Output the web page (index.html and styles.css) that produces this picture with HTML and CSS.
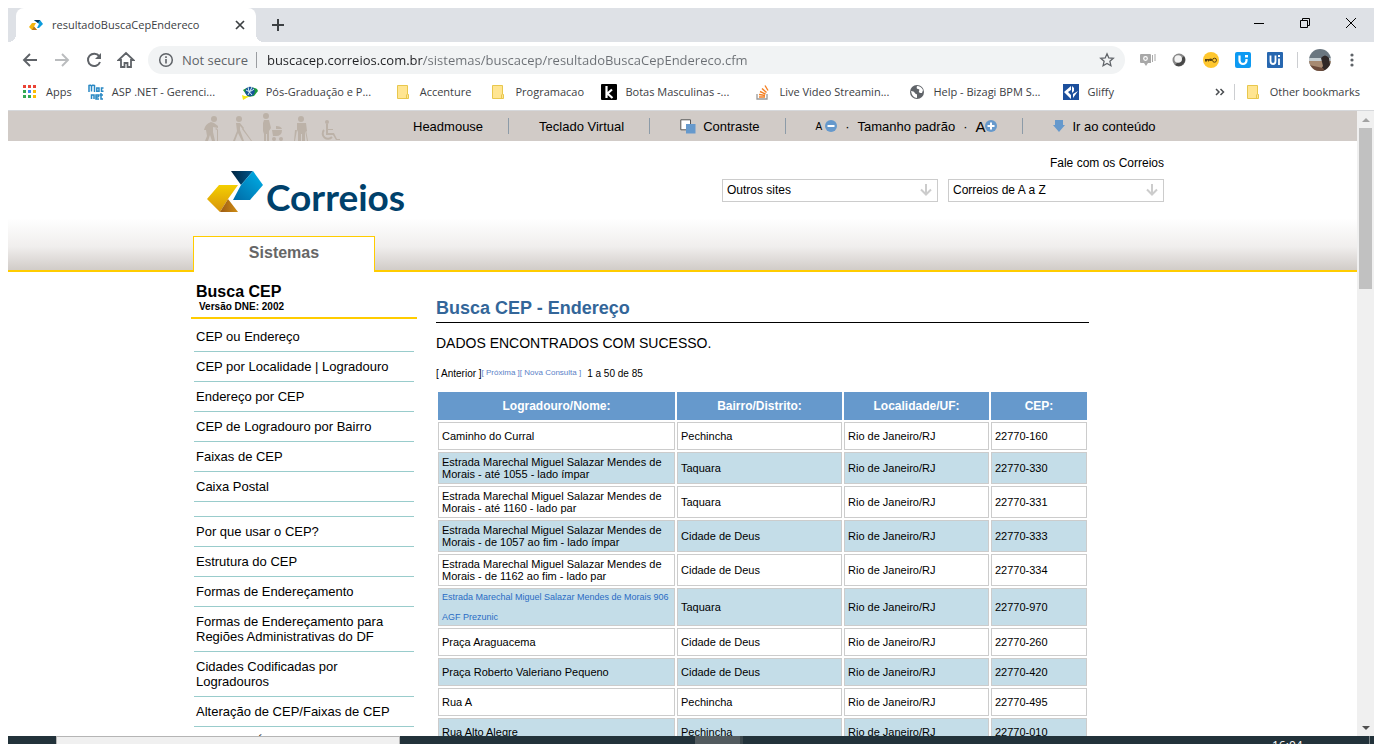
FILE: index.html
```html
<!DOCTYPE html>
<html lang="pt-BR">
<head>
<meta charset="utf-8">
<title>resultadoBuscaCepEndereco</title>
<link rel="stylesheet" href="styles.css">
</head>
<body>
<header class="browser">
  <div class="tabstrip">
    <div class="tab">
      <svg class="icon16" viewBox="0 0 16 16"><path d="M6 3h6l3 4-4 4H9l2-4z" fill="#0b9bdc"/><path d="M6 3h6l-2 3z" fill="#07375a"/><path d="M4 6h4L6 9.500l3 3.500H4L1 10z" fill="#f3b40d"/><path d="M6 9.500L9 13H4z" fill="#b8761a"/></svg>
      <span class="tab-title">resultadoBuscaCepEndereco</span>
      <button class="bare tab-close" aria-label="Close tab"><svg width="10" height="10" viewBox="0 0 10 10"><path d="M1 1l8 8M9 1l-8 8" stroke="#3c4043" stroke-width="1.7"/></svg></button>
    </div>
    <button class="bare new-tab" aria-label="New tab"><svg width="14" height="14" viewBox="0 0 14 14"><path d="M7 1v12M1 7h12" stroke="#3c4043" stroke-width="2"/></svg></button>
    <div class="window-controls">
      <button class="bare" aria-label="Minimize"><svg width="10" height="10" viewBox="0 0 10 10"><path d="M0 5.500h10" stroke="#000"/></svg></button>
      <button class="bare" aria-label="Restore"><svg width="10" height="10" viewBox="0 0 10 10"><path d="M.5 2.500h7v7h-7zM2.500 2V.5h7v7H8" fill="none" stroke="#000"/></svg></button>
      <button class="bare" aria-label="Close"><svg width="10" height="10" viewBox="0 0 10 10"><path d="M0 0l10 10M10 0L0 10" stroke="#000"/></svg></button>
    </div>
  </div>
  <div class="toolbar">
    <button class="bare tool" aria-label="Back"><svg width="16" height="16" viewBox="0 0 16 16"><path d="M15 8H2M8 2L2 8l6 6" fill="none" stroke="#5f6368" stroke-width="1.900"/></svg></button>
    <button class="bare tool" aria-label="Forward"><svg width="16" height="16" viewBox="0 0 16 16"><path d="M1 8h13M8 2l6 6-6 6" fill="none" stroke="#babcbe" stroke-width="1.900"/></svg></button>
    <button class="bare tool" aria-label="Reload"><svg width="16" height="16" viewBox="0 0 16 16"><path d="M13.200 4.200A6.200 6.200 0 1 0 14 10" fill="none" stroke="#5f6368" stroke-width="2"/><path d="M15 1v6H9z" fill="#5f6368"/></svg></button>
    <button class="bare tool" aria-label="Home"><svg width="18" height="18" viewBox="0 0 18 18"><path d="M4 9v7h3.500v-4h3v4H14V9h2.500L9 2 1.500 9z" fill="none" stroke="#5f6368" stroke-width="1.800"/></svg></button>
    <div class="omnibox">
      <svg width="16" height="16" viewBox="0 0 16 16"><circle cx="8" cy="8" r="6.300" fill="none" stroke="#5f6368" stroke-width="1.500"/><path d="M8 7v4.500M8 4.300v1.600" stroke="#5f6368" stroke-width="1.600"/></svg>
      <span class="secure">Not secure</span>
      <input class="url" type="text" aria-label="Address" value="buscacep.correios.com.br/sistemas/buscacep/resultadoBuscaCepEndereco.cfm">
      <button class="bare" aria-label="Bookmark this page"><svg width="16" height="16" viewBox="0 0 16 16"><path d="M8 1.800l1.800 4.100 4.500.4-3.400 3 1 4.400L8 11.400l-3.900 2.300 1-4.400-3.400-3 4.500-.4z" fill="none" stroke="#5f6368" stroke-width="1.300"/></svg></button>
    </div>
    <div class="extensions">
      <button class="bare tool" aria-label="Recorder"><svg width="17" height="16" viewBox="0 0 17 16"><path d="M2 2h9q1 0 1 1v8H9l-2 3-2-3H2q-1 0-1-1V3q0-1 1-1z" fill="#a8a8a8"/><path d="M13 3h1v7h-1zM15.500 2h1v7h-1z" fill="#a8a8a8"/><circle cx="6.500" cy="6.500" r="1.800" fill="none" stroke="#fff" stroke-width="1.200"/></svg></button>
      <button class="bare tool" aria-label="Circle extension"><svg width="16" height="16" viewBox="0 0 16 16"><circle cx="8" cy="8" r="6.500" fill="#888"/><path d="M4 13a6.500 6.500 0 0 0 9-9z" fill="#484848"/><circle cx="7.200" cy="7" r="3.800" fill="#f3f3f3"/></svg></button>
      <button class="bare tool" aria-label="Password extension"><svg width="16" height="16" viewBox="0 0 16 16"><circle cx="8" cy="8" r="8" fill="#ffc72e"/><path d="M2 7h4q2-1 3 0v1.500q-1 1-3 0v1H5v-1H4v1H2z" fill="#5b4310"/><circle cx="11.500" cy="8.200" r="2" fill="none" stroke="#5b4310"/></svg></button>
      <button class="bare tool" aria-label="UiPath web"><svg width="16" height="16" viewBox="0 0 16 16"><rect width="16" height="16" rx="2" fill="#0d9af2"/><path d="M4.500 3.500v5a3.500 3.500 0 0 0 7 0V7" fill="none" stroke="#fff" stroke-width="2.200"/><path d="M10 3h3v2.500h-3z" fill="#fff"/></svg></button>
      <button class="bare tool" aria-label="UiPath"><svg width="16" height="16" viewBox="0 0 16 16"><rect width="16" height="16" rx="1" fill="#2767b0"/><path d="M3.500 3.500V9c0 4 5 4 5 0V3.500M12 6.500V13" fill="none" stroke="#fff" stroke-width="1.800"/><path d="M11 3h2v2h-2z" fill="#fff"/></svg></button>
    </div>
    <button class="bare profile" aria-label="Profile"><svg width="22" height="22" viewBox="0 0 22 22"><clipPath id="face"><circle cx="11" cy="11" r="11"/></clipPath><g clip-path="url(#face)"><path d="M0 0h22v22H0z" fill="#6b7780"/><path d="M0 9h22v3H0z" fill="#c5ced2"/><path d="M0 12h22v10H0z" fill="#a78a72"/><path d="M12 9q4-5 8 0l2 13H11l3-5z" fill="#302827"/><path d="M0 16l14 3 2 3H0z" fill="#6d4c3c"/></g></svg></button>
    <button class="bare tool" aria-label="Menu"><svg width="16" height="16" viewBox="0 0 16 16" fill="#5f6368"><circle cx="8" cy="3" r="1.600"/><circle cx="8" cy="8" r="1.600"/><circle cx="8" cy="13" r="1.600"/></svg></button>
  </div>
  <nav class="bookmarks" aria-label="Bookmarks">
    <a href="#"><svg class="icon16" viewBox="0 0 16 16"><path d="M1 1h3v3H1zM6 1h3v3H6zM11 1h3v3h-3z" fill="#ea4335"/><path d="M1 6h3v3H1zM1 11h3v3H1zM6 11h3v3H6z" fill="#34a853"/><path d="M6 6h3v3H6z" fill="#4285f4"/><path d="M11 6h3v3h-3zM11 11h3v3h-3z" fill="#fbbc05"/></svg><span>Apps</span></a>
    <a href="#"><svg class="icon16" viewBox="0 0 16 16" fill="none" stroke="#2888c4" stroke-width="1.500"><path d="M1 8V1.500q2-1 2.500 1v5M3.500 2.500q.5-2 3-1V8M11 8V4H8.800v3.200H11M15.500 4h-2v3.200h2M3.500 15v-4H6v4M10.500 13H8v-2h2.500v2M8 13v2h3M13 9v6h2M11.500 11H15"/></svg><span class="long">ASP .NET - Gerenci...</span></a>
    <a href="#"><svg class="icon16" viewBox="0 0 16 16"><path d="M1 6q6-5 14-1l1 2-4 5-6 1z" fill="#1e9c3a"/><circle cx="8" cy="7.500" r="4.800" fill="#17549a"/><path d="M4 6q4 3 8-1M6 3q0 5 4 8M10 3L6 11" stroke="#d9eef5" fill="none"/><path d="M0 11q4 2 8 1l-7 4z" fill="#f2e713"/></svg><span class="long">Pós-Graduação e P...</span></a>
    <a href="#"><svg class="icon16" viewBox="0 0 16 16"><path d="M1.500 1.500h10v9h1v4h-11z" fill="#ffe591" stroke="#e8c74d"/><path d="M10.500 10.500v4" stroke="#e8c74d"/></svg><span>Accenture</span></a>
    <a href="#"><svg class="icon16" viewBox="0 0 16 16"><path d="M1.500 1.500h10v9h1v4h-11z" fill="#ffe591" stroke="#e8c74d"/><path d="M10.500 10.500v4" stroke="#e8c74d"/></svg><span class="mid">Programacao</span></a>
    <a href="#"><svg class="icon16" viewBox="0 0 16 16"><rect width="16" height="16" rx="1" fill="#000"/><path d="M5.500 2v12M11 5.500L6.500 9.500l5 4.500" fill="none" stroke="#fff" stroke-width="2.200"/></svg><span class="long">Botas Masculinas -...</span></a>
    <a href="#"><svg class="icon16" viewBox="0 0 16 16"><path d="M2 10v5h10v-5" fill="none" stroke="#999" stroke-width="1.300"/><path d="M4 13h6M4 10.500l6 1M5 7.500l5.500 2.500M7 4.500l4.500 4M10 1.500l3 5" stroke="#f48024" stroke-width="1.400"/></svg><span class="long">Live Video Streamin...</span></a>
    <a href="#"><svg class="icon16" viewBox="0 0 16 16"><circle cx="8" cy="8" r="7" fill="#5f6368"/><path d="M2 7q3 0 4 2t2 1v4q-5 0-6-7M8 2q-1 3 1 3t1 2 3 2l1-3q-2-4-6-4" fill="#fff"/></svg><span class="long">Help - Bizagi BPM S...</span></a>
    <a href="#"><svg class="icon16" viewBox="0 0 16 16"><path d="M0 0h16v16H0z" fill="#1c4f9c"/><path d="M1 8l7-6v4L5 8l3 3v4zM9 2l2 2v3l-2 2zM10 10l5-3-5 7z" fill="#fff"/></svg><span>Gliffy</span></a>
    <button class="bare overflow" aria-label="More bookmarks"><svg width="10" height="8" viewBox="0 0 10 8"><path d="M1 1l3 3-3 3M5.500 1l3 3-3 3" fill="none" stroke="#4a4d51" stroke-width="1.500"/></svg></button>
    <a class="other" href="#"><svg class="icon16" viewBox="0 0 16 16"><path d="M1.500 1.500h10v9h1v4h-11z" fill="#ffe591" stroke="#e8c74d"/><path d="M10.500 10.500v4" stroke="#e8c74d"/></svg><span>Other bookmarks</span></a>
  </nav>
</header>

<div class="viewport">
  <div class="page">
    <div class="access">
      <div class="wrap access-row">
        <svg class="people" width="138" height="28" viewBox="0 0 138 28" fill="#bcb2a8">
          <circle cx="11" cy="6" r="3"/><path d="M8 9q-6 2-7 8h2l1 6-2 5h3l2-6 2 6h3l-2-9 0-5 5 1v-2l-4-3z"/><path d="M12 16q2-2 3 1v11h-1V17z"/>
          <circle cx="36" cy="6" r="3"/><path d="M33 10h4l4 5-1 1-3-3v4l4 11h-2l-4-8-3 8h-2l4-10z"/><path d="M40 15l9 13h-1l-9-12z"/>
          <circle cx="63" cy="3" r="3"/><path d="M61 7h5l2 8-2 3v10h-2v-7h-1v7h-2v-7l-1-3V10z"/><path d="M69 17h10q0 6-6 6h-3zM73 16v-3q5 0 6 3z"/><circle cx="71" cy="26" r="2"/><circle cx="78" cy="26" r="2"/>
          <circle cx="98" cy="6" r="3"/><path d="M94 10h9l1 8-2 1v9h-3v-7h-1v7h-3v-9l-1-2z"/><path d="M94 17l-2 11h-1l1-11zM103 17l2 11h-1l-2-11z"/>
          <circle cx="124" cy="9" r="2"/><path d="M123 11h2v5h5v1h-5v3h6l3 6h3v1h-4l-3-5h-7z"/><path d="M121 17a5 5 0 1 0 8 7" fill="none" stroke="#bcb2a8" stroke-width="2"/>
        </svg>
        <ul class="access-links">
          <li><a href="#">Headmouse</a></li>
          <li><a href="#">Teclado Virtual</a></li>
          <li><a href="#" class="with-icon"><svg width="16" height="16" viewBox="0 0 16 16"><path d="M.8 1.800h9.700v10H.8z" fill="#fff" stroke="#555"/><path d="M6 6h9.500v9.500H6z" fill="#6699cc"/></svg>Contraste</a></li>
          <li class="sizes"><a href="#" class="small-a">A<svg width="12" height="12" viewBox="0 0 12 12"><circle cx="6" cy="6" r="6" fill="#6699cc"/><path d="M2.500 6h7" stroke="#fff" stroke-width="2"/></svg></a><span>·</span><a href="#">Tamanho padrão</a><span>·</span><a href="#" class="big-a">A<svg width="12" height="12" viewBox="0 0 12 12"><circle cx="6" cy="6" r="6" fill="#6699cc"/><path d="M2.500 6h7M6 2.500v7" stroke="#fff" stroke-width="2"/></svg></a></li>
          <li><a href="#" class="with-icon"><svg width="12" height="12" viewBox="0 0 12 12"><path d="M2 0h8v5h2l-6 7-6-7h2z" fill="#6699cc"/></svg>Ir ao conteúdo</a></li>
        </ul>
      </div>
    </div>

    <header class="masthead">
      <div class="wrap masthead-inner">
        <div class="masthead-top">
          <a href="#" class="logo" aria-label="Correios">
            <svg width="56" height="42" viewBox="0 0 56 42">
              <defs>
                <linearGradient id="blue" x1="0" y1="1" x2="1" y2="0"><stop offset="0" stop-color="#006aa5"/><stop offset="1" stop-color="#00b2ea"/></linearGradient>
                <linearGradient id="navy"><stop offset="0" stop-color="#00243f"/><stop offset="1" stop-color="#00568c"/></linearGradient>
                <linearGradient id="gold" x1="0" y1="0" x2="0" y2="1"><stop offset="0" stop-color="#f4cf00"/><stop offset="1" stop-color="#d7930b"/></linearGradient>
                <linearGradient id="brown"><stop offset="0" stop-color="#9c5b15"/><stop offset="1" stop-color="#cf8d13"/></linearGradient>
              </defs>
              <path d="M24 0h22L34 14z" fill="url(#navy)"/><path d="M46 0l10 14-13 15H26l8-15z" fill="url(#blue)"/>
              <path d="M12 14h19L21 28 13 41 0 28z" fill="url(#gold)"/><path d="M21 28l10 13H13z" fill="url(#brown)"/>
            </svg>
            <span>Correios</span>
          </a>
          <div class="masthead-tools">
            <a href="#">Fale com os Correios</a>
            <div class="pickers">
              <div class="picker"><select aria-label="Outros sites"><option>Outros sites</option></select><svg width="12" height="12" viewBox="0 0 12 12"><path d="M6 0v11M1 5.500l5 5 5-5" fill="none" stroke="#ccc" stroke-width="2"/></svg></div>
              <div class="picker"><select aria-label="Correios de A a Z"><option>Correios de A a Z</option></select><svg width="12" height="12" viewBox="0 0 12 12"><path d="M6 0v11M1 5.500l5 5 5-5" fill="none" stroke="#ccc" stroke-width="2"/></svg></div>
            </div>
          </div>
        </div>
        <a href="#" class="system-tab">Sistemas</a>
      </div>
    </header>

    <div class="wrap columns">
      <aside class="side">
        <div class="side-title"><h2>Busca CEP</h2><p>Versão DNE: 2002</p></div>
        <ul>
          <li><a href="#">CEP ou Endereço</a></li>
          <li><a href="#">CEP por Localidade | Logradouro</a></li>
          <li><a href="#">Endereço por CEP</a></li>
          <li><a href="#">CEP de Logradouro por Bairro</a></li>
          <li><a href="#">Faixas de CEP</a></li>
          <li><a href="#">Caixa Postal</a></li>
          <li></li>
          <li><a href="#">Por que usar o CEP?</a></li>
          <li><a href="#">Estrutura do CEP</a></li>
          <li><a href="#">Formas de Endereçamento</a></li>
          <li><a href="#">Formas de Endereçamento para Regiões Administrativas do DF</a></li>
          <li><a href="#">Cidades Codificadas por Logradouros</a></li>
          <li><a href="#">Alteração de CEP/Faixas de CEP</a></li>
          <li><a href="#">Endereço Único</a></li>
        </ul>
      </aside>
      <main class="results">
        <h1>Busca CEP - Endereço</h1>
        <p class="status">DADOS ENCONTRADOS COM SUCESSO.</p>
        <div class="pager"><span>[ Anterior ]</span><a href="#">[ Próxima ]</a><a href="#">[ Nova Consulta ]</a><span class="range">1 a 50 de 85</span></div>
        <table>
          <colgroup><col class="c-street"><col class="c-area"><col class="c-city"><col class="c-cep"></colgroup>
          <thead><tr><th>Logradouro/Nome:</th><th>Bairro/Distrito:</th><th>Localidade/UF:</th><th>CEP:</th></tr></thead>
          <tbody>
            <tr><td>Caminho do Curral</td><td>Pechincha</td><td>Rio de Janeiro/RJ</td><td>22770-160</td></tr>
            <tr><td>Estrada Marechal Miguel Salazar Mendes de Morais - até 1055 - lado ímpar</td><td>Taquara</td><td>Rio de Janeiro/RJ</td><td>22770-330</td></tr>
            <tr><td>Estrada Marechal Miguel Salazar Mendes de Morais - até 1160 - lado par</td><td>Taquara</td><td>Rio de Janeiro/RJ</td><td>22770-331</td></tr>
            <tr><td>Estrada Marechal Miguel Salazar Mendes de Morais - de 1057 ao fim - lado ímpar</td><td>Cidade de Deus</td><td>Rio de Janeiro/RJ</td><td>22770-333</td></tr>
            <tr><td>Estrada Marechal Miguel Salazar Mendes de Morais - de 1162 ao fim - lado par</td><td>Cidade de Deus</td><td>Rio de Janeiro/RJ</td><td>22770-334</td></tr>
            <tr><td><a href="#" class="place"><span>Estrada Marechal Miguel Salazar Mendes de Morais 906</span><span>AGF Prezunic</span></a></td><td>Taquara</td><td>Rio de Janeiro/RJ</td><td>22770-970</td></tr>
            <tr><td>Praça Araguacema</td><td>Cidade de Deus</td><td>Rio de Janeiro/RJ</td><td>22770-260</td></tr>
            <tr><td>Praça Roberto Valeriano Pequeno</td><td>Cidade de Deus</td><td>Rio de Janeiro/RJ</td><td>22770-420</td></tr>
            <tr><td>Rua A</td><td>Pechincha</td><td>Rio de Janeiro/RJ</td><td>22770-495</td></tr>
            <tr><td>Rua Alto Alegre</td><td>Pechincha</td><td>Rio de Janeiro/RJ</td><td>22770-010</td></tr>
          </tbody>
        </table>
      </main>
    </div>
  </div>
  <div class="scrollbar">
    <svg width="17" height="17" viewBox="0 0 17 17"><path d="M5 11l4-4 4 4z" fill="#a3a3a3"/></svg>
    <div class="thumb"></div>
    <svg width="17" height="17" viewBox="0 0 17 17"><path d="M5 7l4 4 4-4z" fill="#505050"/></svg>
  </div>
</div>

<footer class="taskbar"><div class="search"></div><div class="active-app"></div><span class="clock">16:04</span></footer>
</body>
</html>
```

FILE: styles.css
```css
* { box-sizing: border-box; }
body {
  margin: 0;
  padding: 8px 8px 0;
  height: 100vh;
  overflow: hidden;
  display: grid;
  grid-template-rows: auto minmax(0, 1fr) 8px;
  background: #fff;
  color: #000;
  font: 13px/15px "Liberation Sans", Arial, sans-serif;
}
a { color: inherit; text-decoration: none; }
ul { list-style: none; margin: 0; padding: 0; }
h1, h2, p { margin: 0; }
svg { display: block; flex: none; }
.bare {
  border: 0; padding: 0; background: none;
  display: flex; align-items: center; justify-content: center;
}
.icon16 { width: 16px; height: 16px; }

/* browser frame */
.browser { font: 11px/16px "Open Sans", "Noto Sans", sans-serif; border-bottom: 1px solid #d6d8db; }
.tabstrip { display: flex; height: 34px; padding-left: 8px; background: #dee1e6; }
.tab {
  position: relative;
  display: flex; align-items: center; gap: 8px;
  width: 240px; padding: 0 11px 0 12px;
  background: #fff; border-radius: 8px 8px 0 0; color: #3c4043;
}
.tab::before, .tab::after {
  content: ""; position: absolute; bottom: 0; width: 8px; height: 8px;
}
.tab::before { left: -8px; background: radial-gradient(circle at 0 0, #dee1e6 8px, #fff 8px); }
.tab::after { right: -8px; background: radial-gradient(circle at 100% 0, #dee1e6 8px, #fff 8px); }
.tab-title { white-space: nowrap; }
.tab-close { margin-left: auto; }
.new-tab { width: 28px; margin-left: 8px; }
.window-controls { display: flex; height: 29px; margin-left: auto; }
.window-controls .bare { width: 46px; }
.toolbar { display: flex; align-items: center; height: 36px; padding: 0 6px; }
.tool { width: 32px; height: 32px; }
.omnibox {
  flex: 1; display: flex; align-items: center;
  height: 28px; margin: 0 6px; padding: 0 10px;
  border-radius: 14px; background: #f1f3f4;
  font-size: 13px; color: #5f6368;
}
.secure { margin-left: 8px; padding-right: 8px; border-right: 1px solid #9a9da1; }
.url {
  flex: 1; min-width: 0; height: 24px; margin-left: 10px;
  border: 0; padding: 0; outline: 0; font: inherit;
  color: transparent;
  background: linear-gradient(90deg, #202124 156px, #6b6f74 156px);
  -webkit-background-clip: text; background-clip: text;
}
.extensions { display: flex; padding-right: 11px; }
.extensions::after { content: ""; width: 1px; height: 16px; margin: 8px 0 0 6px; background: #ccced1; }
.profile { width: 22px; height: 22px; margin-right: 5px; }
.bookmarks { display: flex; align-items: center; height: 32px; padding: 0 14px 4px; gap: 20px; color: #3c4043; white-space: nowrap; }
.bookmarks a { display: flex; align-items: center; gap: 8px; }
.bookmarks a:first-child { margin-right: -4px; }
.long { width: 110px; }
.mid { width: 66px; }
.bookmarks .overflow { margin-left: auto; margin-right: -11px; }
.bookmarks .other { padding-left: 11px; border-left: 1px solid #ccced1; }

/* page area */
.viewport { display: grid; grid-template-columns: minmax(0, 1fr) 17px; overflow: hidden; }
.page { overflow: hidden; }
.wrap { width: 100%; max-width: 979px; margin: 0 auto; }
.scrollbar { display: flex; flex-direction: column; background: #f0f0f0; }
.thumb { height: 161px; margin: 0 2px auto; background: #c1c1c1; }

.access { background: #d1cbc7; }
.access-row { display: flex; align-items: center; height: 30px; padding-left: 10px; }
.people { align-self: flex-end; }
.access-links { display: flex; align-items: center; margin-left: 42px; white-space: nowrap; }
.access-links li { display: flex; align-items: center; height: 16px; padding: 0 25px 0 30px; border-right: 1px solid #8c9ba8; }
.access-links li:last-child { border-right: 0; }
.with-icon { display: flex; align-items: center; gap: 7px; }
.sizes { gap: 8px; }
.small-a, .big-a { display: flex; align-items: center; }
.small-a { gap: 3px; font-size: 10px; }
.big-a { font-size: 15px; }

.masthead {
  border-bottom: 2px solid #fc0;
  background: linear-gradient(#fff 60%, #f0eeed 82%, #d1ccc8);
}
.masthead-top { display: flex; justify-content: space-between; height: 95px; padding: 14px 8px 0 14px; }
.logo { display: flex; gap: 3px; margin-top: 16px; height: 42px; color: #00416b; }
.logo span { font: 700 37px/52px Lato, sans-serif; }
.masthead-tools { display: flex; flex-direction: column; align-items: flex-end; gap: 8px; font-size: 12px; line-height: 16px; }
.pickers { display: flex; gap: 10px; }
.picker { position: relative; width: 216px; }
.picker select {
  appearance: none; width: 100%; height: 23px; padding: 0 4px 2px;
  border: 1px solid #ccc; border-radius: 0; background: #fff; color: #000; font: inherit;
}
.picker svg { position: absolute; right: 6px; top: 5px; pointer-events: none; }
.system-tab {
  display: block; width: 182px; height: 36px; margin-bottom: -2px;
  border: 1px solid #fc0; border-bottom: 0; background: #fff;
  color: #666; font-size: 16px; font-weight: 700; line-height: 32px; text-align: center;
  position: relative;
}

.columns { display: grid; grid-template-columns: 224px 653px; gap: 19px; padding-top: 11px; }
.side-title { padding: 0 5px 4px; margin-left: -2px; border-bottom: 2px solid #fc0; }
.side-title h2 { font-size: 16px; line-height: 18px; }
.side-title p { padding-left: 3px; font-size: 10px; line-height: 12px; font-weight: 700; }
.side ul { width: 221px; padding: 3px 0 0 1px; }
.side li { padding: 7px 2px; border-bottom: 1px solid #9cc; }
.side li a { display: block; }

.results { padding-top: 15px; }
.results h1 { padding-bottom: 4px; border-bottom: 1px solid #000; color: #369; font-size: 18px; line-height: 20px; }
.status { padding: 12px 0 15px; font-size: 14px; line-height: 16px; }
.pager { display: flex; font-size: 10px; line-height: 16px; white-space: nowrap; }
.pager a { font-size: 8px; line-height: 14px; color: #5b7fc7; }
.range { margin-left: 6px; }
table { width: 100%; margin-top: 8px; table-layout: fixed; border-spacing: 2px; font-size: 11px; line-height: 12px; }
.c-street { width: 237px; }
.c-area { width: 165px; }
.c-city { width: 145px; }
.c-cep { width: 96px; }
th { height: 28px; padding: 0; background: #69c; color: #fff; font-size: 12px; }
td { height: 28px; padding: 3px; border: 1px solid #ccc; }
tbody tr:nth-child(even) td { background: #c4dde8; }
.place { display: flex; flex-direction: column; gap: 10px; color: #2a6cc4; font-size: 9px; line-height: 10px; white-space: nowrap; }

/* desktop taskbar */
.taskbar { display: flex; overflow: hidden; background: #22323a; padding-left: 48px; }
.search { width: 344px; border: 1px solid #b5b5b5; border-bottom: 0; background: #f0f0f0; }
.active-app { width: 48px; margin-left: 295px; background: #525b5f; border-right: 3px solid #3b474c; }
.clock { margin-left: auto; padding-top: 2px; margin-right: 4px; width: 98px; height: 20px; border-right: 1px solid #7c868a; color: #fff; font: 12px/16px "Open Sans", sans-serif; }
```
